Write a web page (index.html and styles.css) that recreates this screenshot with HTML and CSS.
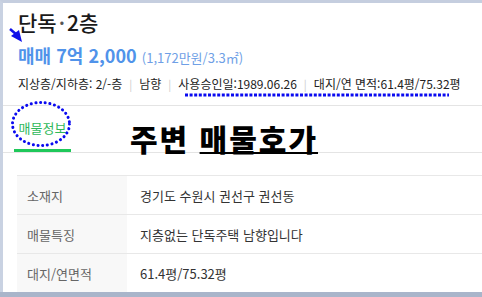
FILE: index.html
```html
<!DOCTYPE html>
<html lang="ko">
<head>
    <meta charset="UTF-8">
    <title>매물정보</title>
    <link rel="stylesheet" href="styles.css">
</head>
<body>
    <div class="frame">
        <!-- Summary -->
        <section class="summary">
            <h1 class="title">단독<span class="dot">·</span>2층</h1>
            <p class="price">매매 7억 2,000 <span class="unit-price">(1,172만원/3.3㎡)</span></p>
            <p class="info">
                <span>지상층/지하층: 2/-층</span><span class="sep">|</span><span>남향</span><span class="sep">|</span><span>사용승인일:1989.06.26</span><span class="sep">|</span><span>대지/연 면적:61.4평/75.32평</span>
            </p>

            <!-- annotation: arrow + dotted line -->
            <svg class="mark-arrow" width="16" height="16" viewBox="0 0 16 16">
                <line x1="1" y1="1" x2="8" y2="7" stroke="#1010e8" stroke-width="2.5"/>
                <polygon points="2,8 10,2 13,14" fill="#1010e8"/>
            </svg>
            <svg class="mark-line" width="264" height="4" viewBox="0 0 264 4">
                <line x1="0" y1="2" x2="264" y2="2" stroke="#0a0af0" stroke-width="3" stroke-dasharray="3 1.6"/>
            </svg>
        </section>

        <!-- Tabs -->
        <nav class="tabs">
            <a class="tab active">매물정보</a>
            <span class="headline">주변 <u>매물호가</u></span>
            <svg class="mark-ellipse" width="62" height="48" viewBox="0 0 62 48">
                <ellipse cx="31" cy="24" rx="28.5" ry="21.5" fill="none" stroke="#0a0af0" stroke-width="3" stroke-linecap="round" stroke-dasharray="0.1 4.6"/>
            </svg>
        </nav>

        <!-- Detail table -->
        <table class="detail">
            <tr><th>소재지</th><td>경기도 수원시 권선구 권선동</td></tr>
            <tr><th>매물특징</th><td>지층없는 단독주택 남향입니다</td></tr>
            <tr><th>대지/연면적</th><td>61.4평/75.32평</td></tr>
        </table>
    </div>
</body>
</html>
```

FILE: styles.css
```css
* {
    margin: 0;
    padding: 0;
    box-sizing: border-box;
}

body {
    background: #a9b5ca;
    font-family: 'Noto Sans CJK KR', 'Noto Sans', sans-serif;
    color: #222;
    width: 482px;
    height: 297px;
    overflow: hidden;
}

.frame {
    background: #fff;
    border-left: 3px solid #c9d2e2;
    border-top: 3px solid #c5cedf;
    height: 292px;
    overflow: hidden;
}

/* Summary */
.summary {
    position: relative;
    padding: 5px 0 0 15px;
    height: 102px;
}

.title {
    font-size: 21px;
    font-weight: 500;
    line-height: 28px;
    color: #1a1a1a;
}

.title .dot {
    color: #555;
    margin: 0 2px;
}

.price {
    margin-top: 8px;
    font-size: 18px;
    font-weight: 700;
    line-height: 22px;
    color: #5093ea;
}

.unit-price {
    font-size: 13px;
    font-weight: 400;
    color: #6f9fe6;
}

.info {
    margin-top: 7px;
    font-size: 12px;
    line-height: 16px;
    color: #222;
    white-space: nowrap;
}

.info .sep {
    color: #ccc;
    margin: 0 7px;
    font-size: 11px;
}

.mark-arrow {
    position: absolute;
    left: 6px;
    top: 25px;
}

.mark-line {
    position: absolute;
    left: 182px;
    top: 90px;
}

/* Tabs */
.tabs {
    position: relative;
    display: flex;
    align-items: flex-end;
    border-top: 1px solid #e4e4e4;
    border-bottom: 1px solid #e4e4e4;
    height: 48px;
}

.tab {
    margin-left: 11px;
    width: 57px;
    height: 46px;
    padding-top: 12px;
    text-align: center;
    font-size: 13px;
    color: #2fb85a;
    border-bottom: 3px solid #1fc85a;
}

.headline {
    margin-left: 59px;
    margin-bottom: -4px;
    font-size: 30px;
    font-weight: 900;
    letter-spacing: 2px;
    line-height: 36px;
    color: #000;
}

.headline u {
    text-decoration-thickness: 2px;
    text-underline-offset: 1px;
}

.mark-ellipse {
    position: absolute;
    left: 7px;
    top: -6px;
}

/* Table */
.detail {
    margin: 22px 0 0 14px;
    width: 480px;
    border-collapse: collapse;
    font-size: 13px;
}

.detail tr {
    border-top: 1px solid #e8e8e8;
    height: 39px;
}

.detail th {
    width: 110px;
    background: #f8f8f8;
    color: #666;
    font-weight: 400;
    text-align: left;
    padding-left: 10px;
}

.detail td {
    padding-left: 13px;
    color: #333;
}
```
